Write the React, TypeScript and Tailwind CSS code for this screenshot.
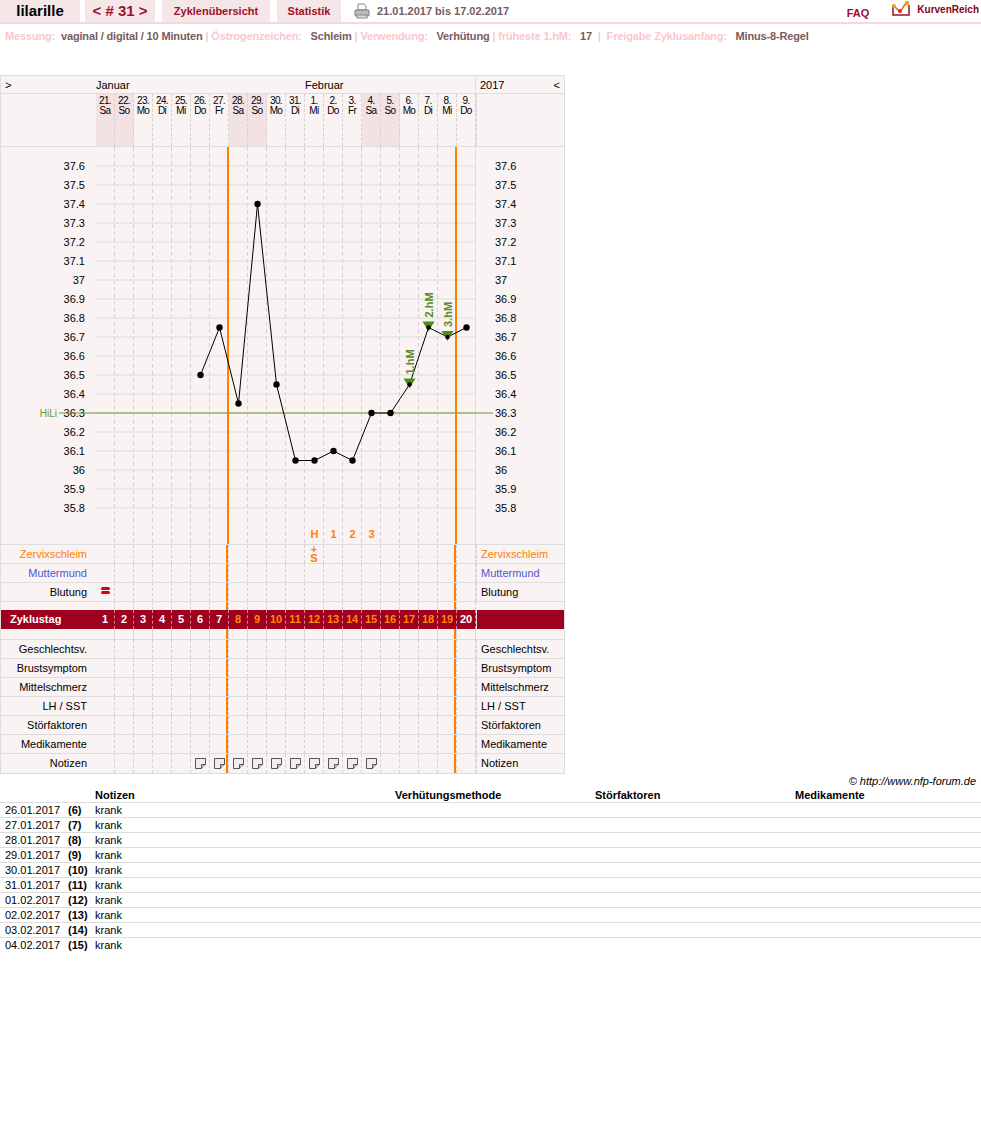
import React from "react";

const F = { fontFamily: '"Liberation Sans", Arial, sans-serif' };
const days = [
  ["21.", "Sa"], ["22.", "So"], ["23.", "Mo"], ["24.", "Di"], ["25.", "Mi"], ["26.", "Do"], ["27.", "Fr"],
  ["28.", "Sa"], ["29.", "So"], ["30.", "Mo"], ["31.", "Di"], ["1.", "Mi"], ["2.", "Do"], ["3.", "Fr"],
  ["4.", "Sa"], ["5.", "So"], ["6.", "Mo"], ["7.", "Di"], ["8.", "Mi"], ["9.", "Do"],
];
const weekend = [0, 1, 7, 8, 14, 15];
const temps: [number, number][] = [
  [5, 36.5], [6, 36.75], [7, 36.35], [8, 37.4], [9, 36.45], [10, 36.05], [11, 36.05], [12, 36.1],
  [13, 36.05], [14, 36.3], [15, 36.3], [16, 36.45], [17, 36.75], [18, 36.7], [19, 36.75],
];
const cx = (i: number) => 95 + 19 * i + 9.5;
const ty = (t: number) => 19 + (37.6 - t) * 190;

function Cell({ i, children }: { i: number; children?: React.ReactNode }) {
  const orange = i === 6 || i === 18;
  return (
    <div
      className={`w-[19px] shrink-0 h-full flex items-center justify-center border-r border-dashed border-[#d8d0d0] ${
        orange ? "shadow-[inset_-2px_0_0_#ff8000]" : ""
      }`}
    >
      {children}
    </div>
  );
}

function Row({
  label, lc = "text-black", right, rc = "text-black", cells = {}, last = false,
}: { label: string; lc?: string; right?: string; rc?: string; cells?: Record<number, React.ReactNode>; last?: boolean }) {
  return (
    <div className={`flex h-[19px] text-[11px] ${last ? "" : "border-b border-[#ddd]"}`}>
      <div className={`w-[95px] shrink-0 text-right pr-[9px] leading-[19px] ${lc}`}>{label}</div>
      {days.map((_, i) => (
        <Cell key={i} i={i}>{cells[i]}</Cell>
      ))}
      <div className={`w-[90px] shrink-0 border-l border-[#ddd] pl-[4px] leading-[19px] ${rc}`}>{right}</div>
    </div>
  );
}

const Note = () => (
  <svg width="11" height="11" viewBox="0 0 11 11">
    <path d="M0.5 0.5h10v6l-4 4h-6z" fill="#eee" stroke="#555" />
    <path d="M6.5 10.5v-4h4" fill="#ccc" stroke="#555" />
  </svg>
);

function Chart() {
  const lines = [];
  for (let k = 0; k <= 18; k++) lines.push(37.6 - k * 0.1);
  return (
    <svg width="563" height="397" className="block">
      <rect x="0" y="0" width="563" height="397" fill="#f9f3f3" />
      {days.map((_, i) => (
        <line key={i} x1={95 + 19 * i + 18.5} y1="0" x2={95 + 19 * i + 18.5} y2="397" stroke="#d8d0d0" strokeDasharray="4 3" />
      ))}
      {lines.map((t, k) => (
        <g key={k}>
          <line x1="95" x2="474" y1={ty(t)} y2={ty(t)} stroke="#ddd" />
          <text x="84" y={ty(t) + 4} textAnchor="end" fontSize="11" fill="#000" style={F}>
            {Math.round(t * 10) / 10}
          </text>
          <text x="494" y={ty(t) + 4} fontSize="11" fill="#000" style={F}>
            {Math.round(t * 10) / 10}
          </text>
        </g>
      ))}
      <line x1="474.5" x2="474.5" y1="0" y2="397" stroke="#ddd" />
      <line x1="58" x2="492" y1={ty(36.3)} y2={ty(36.3)} stroke="#6a9a2a" />
      <text x="56" y={ty(36.3) + 4} textAnchor="end" fontSize="10" fill="#6a9a2a" style={F}>HiLi</text>
      <line x1="227" x2="227" y1="0" y2="397" stroke="#ff8000" strokeWidth="2" />
      <line x1="455" x2="455" y1="0" y2="397" stroke="#ff8000" strokeWidth="2" />
      <polyline points={temps.map(([i, t]) => `${cx(i)},${ty(t)}`).join(" ")} fill="none" stroke="#000" />
      {[16, 17, 18].map((i) => {
        const t = temps.find((p) => p[0] === i)![1];
        return <path key={i} d={`M${cx(i) - 6} ${ty(t) - 6}h12l-6 10z`} fill="#4f8a1a" />;
      })}
      {temps.map(([i, t]) => (
        <circle key={i} cx={cx(i)} cy={ty(t)} r={i >= 16 && i <= 18 ? 2.2 : 3.2} fill="#000" />
      ))}
      {[
        [16, 36.45, "1.hM"], [17, 36.75, "2.hM"], [18, 36.7, "3.hM"],
      ].map(([i, t, s]) => (
        <text key={s as string} transform={`translate(${cx(i as number) + 4},${ty(t as number) - 10}) rotate(-90)`} fontSize="11" fontWeight="bold" fill="#5a8a20" style={F}>
          {s}
        </text>
      ))}
      {["H", "1", "2", "3"].map((s, k) => (
        <text key={k} x={cx(11 + k)} y="391" textAnchor="middle" fontSize="11" fontWeight="bold" fill="#ff8000" style={F}>{s}</text>
      ))}
    </svg>
  );
}

export default function App() {
  return (
    <div className="w-[981px] h-[1132px] bg-white text-black" style={F}>
      {/* header */}
      <div className="flex items-center h-[24px] border-b-[2px] border-[#f3d8dc]">
        <div className="w-[80px] h-full bg-[#f5e6e8] flex items-center justify-center text-[15px] font-bold">lilarille</div>
        <div className="ml-[5px] w-[70px] h-full bg-[#f5e6e8] flex items-center justify-center text-[15px] font-bold text-[#a0102a]">&lt; # 31 &gt;</div>
        <div className="ml-[7px] w-[108px] h-full bg-[#f5e6e8] flex items-center justify-center text-[11px] font-bold text-[#a0102a]">Zyklenübersicht</div>
        <div className="ml-[7px] w-[64px] h-full bg-[#f5e6e8] flex items-center justify-center text-[11px] font-bold text-[#a0102a]">Statistik</div>
        <svg width="16" height="16" viewBox="0 0 16 16" className="ml-[13px]">
          <path d="M4 1h6l2 2v4H4z" fill="#fff" stroke="#888" />
          <rect x="1" y="7" width="14" height="6" rx="1" fill="#bbb" stroke="#777" />
          <rect x="3" y="12" width="10" height="3" fill="#ddd" stroke="#888" />
        </svg>
        <div className="ml-[7px] text-[11px] font-bold text-[#7a5a60]">21.01.2017 bis 17.02.2017</div>
        <div className="ml-auto text-[11px] font-bold text-[#a0102a] mt-[5px]">FAQ</div>
        <div className="ml-[22px] mr-[2px] flex items-center gap-[4px] -mt-[4px]">
          <svg width="22" height="18" viewBox="0 0 22 18">
            <path d="M2 5v10h16V5" fill="none" stroke="#a0102a" strokeWidth="1.5" />
            <path d="M3 6l6 6 6-9" fill="none" stroke="#e07020" strokeWidth="1.5" />
            <circle cx="3" cy="6" r="2" fill="#f0a020" />
            <circle cx="9" cy="11" r="2" fill="#e03020" />
            <circle cx="16" cy="3" r="2.2" fill="#f0a020" />
          </svg>
          <span className="text-[10px] font-bold text-[#8a0018]">KurvenReich</span>
        </div>
      </div>
      <div className="h-[24px] flex items-center pl-[5px] text-[11px] font-bold whitespace-pre tracking-[-0.15px]">
        <span className="text-[#f8c8cc]">Messung:  </span><span className="text-[#7a5a60]">vaginal / digital / 10 Minuten</span>
        <span className="text-[#f8c8cc]"> | Östrogenzeichen:   </span><span className="text-[#7a5a60]">Schleim</span>
        <span className="text-[#f8c8cc]"> | Verwendung:   </span><span className="text-[#7a5a60]">Verhütung</span>
        <span className="text-[#f8c8cc]"> | früheste 1.hM:   </span><span className="text-[#7a5a60]">17</span>
        <span className="text-[#f8c8cc]">  |  Freigabe Zyklusanfang:   </span><span className="text-[#7a5a60]">Minus-8-Regel</span>
      </div>

      {/* chart table */}
      <div className="mt-[27px] w-[565px] border border-[#ddd] bg-[#f9f3f3]">
        <div className="flex h-[18px] border-b border-[#ddd] text-[11px] leading-[18px]">
          <div className="w-[95px] pl-[4px]">&gt;</div>
          <div className="w-[209px]">Januar</div>
          <div className="w-[170px]">Februar</div>
          <div className="w-[89px] border-l border-[#ddd] pl-[4px] flex justify-between pr-[4px]"><span>2017</span><span>&lt;</span></div>
        </div>
        <div className="flex h-[53px] border-b border-[#ddd] text-[10px] leading-[10px] tracking-[-0.6px]">
          <div className="w-[95px] shrink-0" />
          {days.map(([d, w], i) => (
            <div key={i} className={`w-[19px] shrink-0 h-full border-r border-dashed border-[#d8d0d0] text-center pt-[2px] ${weekend.includes(i) ? "bg-[#f3e2e4]" : ""}`}>
              <div>{d}</div>
              <div>{w}</div>
            </div>
          ))}
          <div className="w-[89px] shrink-0 border-l border-[#ddd]" />
        </div>
        <div className="border-b border-[#ddd]"><Chart /></div>
        <Row label="Zervixschleim" lc="text-[#ff8000]" right="Zervixschleim" rc="text-[#ff8000]"
          cells={{ 11: <div className="text-[#ff8000] font-bold text-[10px] leading-[7px] text-center"><div>+</div><div className="text-[11px] leading-[10px]">S</div></div> }} />
        <Row label="Muttermund" lc="text-[#4a5ad0]" right="Muttermund" rc="text-[#4a5ad0]" />
        <Row label="Blutung" right="Blutung"
          cells={{ 0: <div className="flex flex-col gap-[1px] -mt-[4px]"><div className="w-[9px] h-[3px] rounded-full bg-[#e00000]" /><div className="w-[9px] h-[3px] rounded-full bg-[#e00000]" /></div> }} />
        <div className="flex h-[8px]">
          <div className="w-[95px]" />
          {days.map((_, i) => <Cell key={i} i={i} />)}
        </div>
        <div className="flex h-[19px] bg-[#a00020] text-[11px] font-bold leading-[19px]">
          <div className="w-[95px] shrink-0 pl-[9px] text-white">Zyklustag</div>
          {days.map((_, i) => (
            <div key={i} className={`w-[19px] shrink-0 text-center border-r border-dashed border-[#d88] ${i >= 7 && i <= 18 ? "text-[#ff8c00]" : "text-white"}`}>{i + 1}</div>
          ))}
          <div className="w-[89px] shrink-0 border-l border-[#ddd]" />
        </div>
        <div className="flex h-[11px] border-b border-[#ddd]">
          <div className="w-[95px]" />
          {days.map((_, i) => <Cell key={i} i={i} />)}
        </div>
        <Row label="Geschlechtsv." right="Geschlechtsv." />
        <Row label="Brustsymptom" right="Brustsymptom" />
        <Row label="Mittelschmerz" right="Mittelschmerz" />
        <Row label="LH / SST" right="LH / SST" />
        <Row label="Störfaktoren" right="Störfaktoren" />
        <Row label="Medikamente" right="Medikamente" />
        <Row label="Notizen" right="Notizen" last
          cells={Object.fromEntries([5, 6, 7, 8, 9, 10, 11, 12, 13, 14].map((i) => [i, <Note />]))} />
      </div>

      {/* notes table */}
      <div className="text-right pr-[5px] text-[11px] italic mt-[1px] h-[13px] leading-[13px]">© http://www.nfp-forum.de</div>
      <div className="text-[11px]">
        <div className="flex h-[15px] leading-[15px] font-bold border-b border-[#ddd]">
          <div className="w-[95px]" />
          <div className="w-[300px]">Notizen</div>
          <div className="w-[200px]">Verhütungsmethode</div>
          <div className="w-[200px]">Störfaktoren</div>
          <div>Medikamente</div>
        </div>
        {Array.from({ length: 10 }, (_, k) => {
          const day = 26 + k;
          const date = day <= 31 ? `${day}.01.2017` : `0${day - 31}.02.2017`;
          return (
            <div key={k} className={`flex h-[15px] leading-[15px] ${k < 9 ? "border-b border-[#ddd]" : ""}`}>
              <div className="w-[68px] pl-[5px]">{date}</div>
              <div className="w-[27px] font-bold">({k + 6})</div>
              <div>krank</div>
            </div>
          );
        })}
      </div>
    </div>
  );
}
